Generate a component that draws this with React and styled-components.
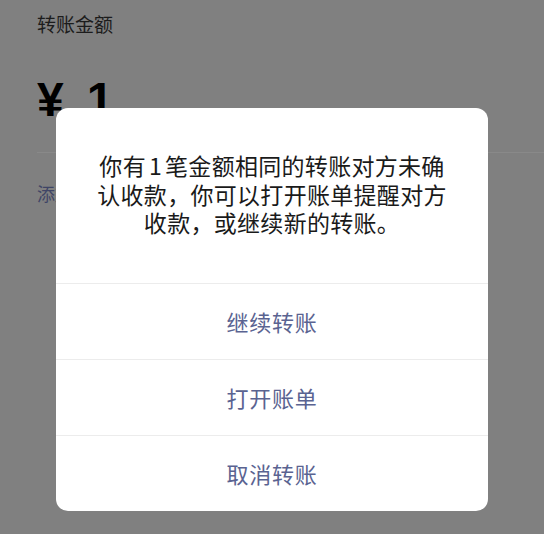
import React from "react";
import styled, { createGlobalStyle } from "styled-components";

const Global = createGlobalStyle`
  html, body { margin: 0; padding: 0; }
  body {
    width: 544px;
    height: 534px;
    overflow: hidden;
    background: #808080;
    font-family: "Noto Sans CJK SC", "Noto Sans", sans-serif;
  }
`;

const Page = styled.div`
  position: relative;
  width: 544px;
  height: 534px;
  background: #808080;
  overflow: hidden;
`;

const Content = styled.div`
  display: flex;
  flex-direction: column;
  padding: 12px 0 0 37px;
`;

const Label = styled.div`
  font-size: 19px;
  line-height: 24px;
  color: #1c1c1c;
`;

const Amount = styled.div`
  display: flex;
  align-items: baseline;
  gap: 23px;
  margin-top: 40px;
  height: 48px;
  font-family: "Liberation Sans", Arial, sans-serif;
  font-weight: 900;
  font-size: 48px;
  line-height: 48px;
  color: #000;
`;

const Divider = styled.div`
  margin-top: 28px;
  height: 1px;
  background: rgba(255, 255, 255, 0.07);
`;

const AddNote = styled.div`
  margin-top: 28px;
  font-size: 18px;
  line-height: 24px;
  color: #3f4566;
`;

const Overlay = styled.div`
  position: absolute;
  inset: 0;
  display: flex;
  justify-content: center;
  align-items: flex-start;
  padding-top: 108px;
`;

const Dialog = styled.div`
  width: 432px;
  background: #fff;
  border-radius: 12px;
  overflow: hidden;
  display: flex;
  flex-direction: column;
`;

const Message = styled.div`
  padding: 43px 38px 46px;
  font-size: 23px;
  line-height: 28.5px;
  letter-spacing: 0.3px;
  color: #1a1a1a;
  text-align: center;
`;

const Num = styled.span`
  margin: 0 3px;
`;

const Action = styled.div`
  height: 75px;
  border-top: 1px solid #ececec;
  display: flex;
  align-items: center;
  justify-content: center;
  font-size: 22px;
  letter-spacing: 0.8px;
  color: #5a6391;
`;

export default function App() {
  return (
    <Page>
      <Global />
      <Content>
        <Label>转账金额</Label>
        <Amount>
          <span>¥</span>
          <span>1</span>
        </Amount>
        <Divider />
        <AddNote>添加转账说明</AddNote>
      </Content>
      <Overlay>
        <Dialog>
          <Message>
            你有<Num>1</Num>笔金额相同的转账对方未确认收款，你可以打开账单提醒对方收款，或继续新的转账。
          </Message>
          <Action>继续转账</Action>
          <Action>打开账单</Action>
          <Action>取消转账</Action>
        </Dialog>
      </Overlay>
    </Page>
  );
}
